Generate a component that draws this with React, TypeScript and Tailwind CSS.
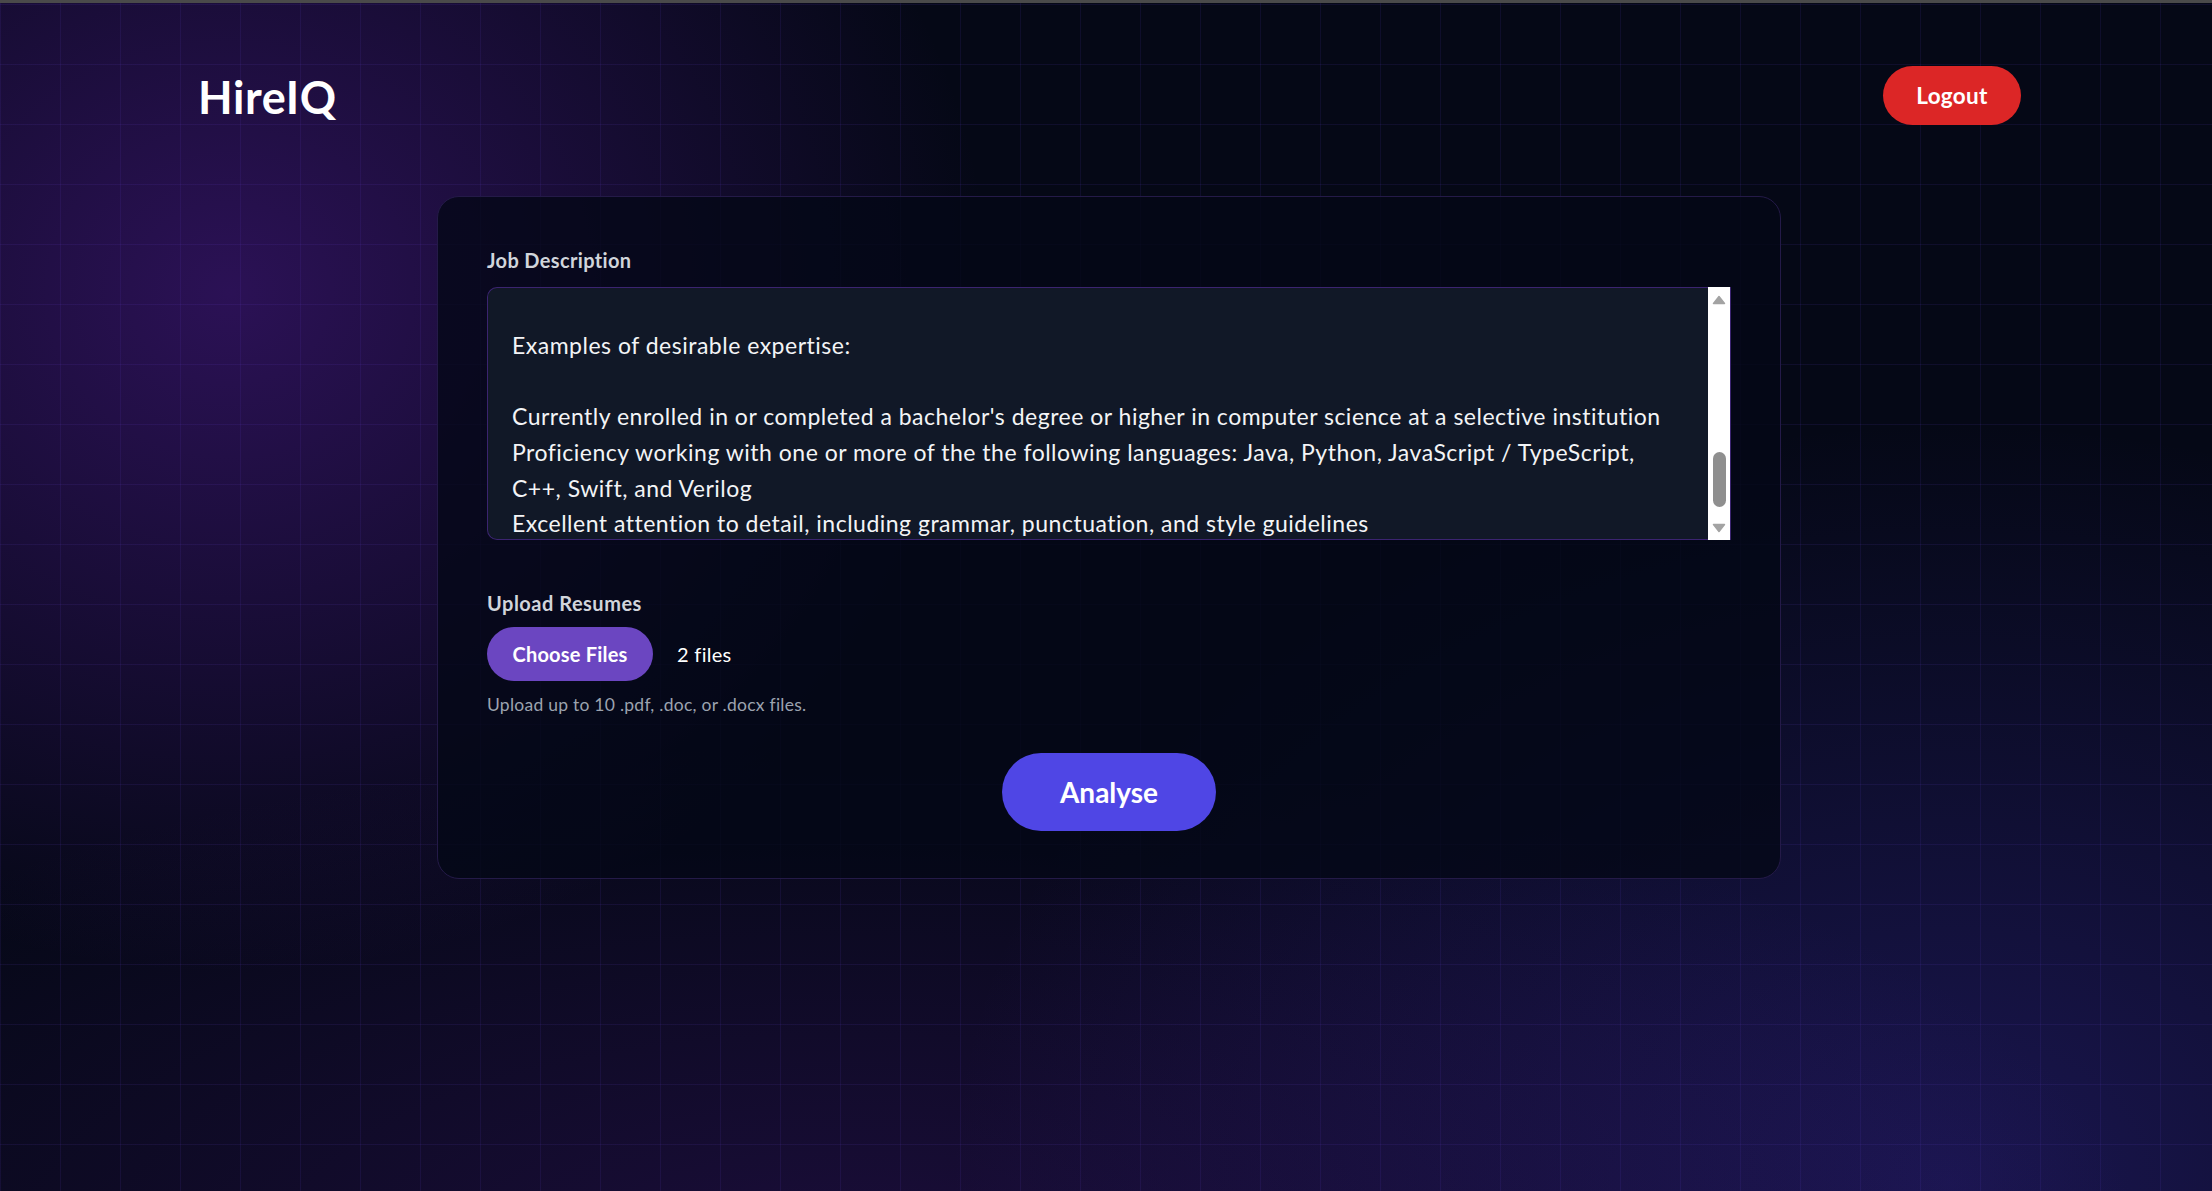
import { useState } from 'react';

const jobLines = [
  '',
  'Examples of desirable expertise:',
  '',
  "Currently enrolled in or completed a bachelor's degree or higher in computer science at a selective institution",
  'Proficiency working with one or more of the the following languages: Java, Python, JavaScript / TypeScript,',
  'C++, Swift, and Verilog',
  'Excellent attention to detail, including grammar, punctuation, and style guidelines',
];

function FakeScrollbar() {
  return (
    <div className="w-[23px] shrink-0 bg-white flex flex-col items-center pt-[8px] pb-[7px] border-r border-[#3b2470]">
      <svg width="14" height="10" viewBox="0 0 14 10">
        <path d="M7 1.5 L12.5 8.5 H1.5 Z" fill="#a3a3a3" stroke="#a3a3a3" strokeWidth="1.5" strokeLinejoin="round" />
      </svg>
      <div className="flex-1 w-full flex justify-center">
        <div className="mt-[147px] w-[13px] h-[55px] rounded-full bg-[#8f8f8f]" />
      </div>
      <svg width="14" height="10" viewBox="0 0 14 10">
        <path d="M7 8.5 L12.5 1.5 H1.5 Z" fill="#a3a3a3" stroke="#a3a3a3" strokeWidth="1.5" strokeLinejoin="round" />
      </svg>
    </div>
  );
}

export default function App() {
  const [fileCount] = useState(2);

  return (
    <div className="min-h-screen bg-[#050816] font-['Lato',sans-serif] overflow-hidden">
      <div className="h-[3px] bg-[#4a4a4a]" />
      <div className="relative min-h-[1188px]">
        {/* background glows + grid */}
        <div className="pointer-events-none absolute inset-0 bg-[radial-gradient(ellipse_760px_680px_at_230px_290px,rgba(88,28,160,0.46),transparent)]" />
        <div className="pointer-events-none absolute inset-0 bg-[radial-gradient(ellipse_1000px_760px_at_1950px_1180px,rgba(70,50,200,0.32),transparent)]" />
        <div className="pointer-events-none absolute inset-0 bg-[radial-gradient(ellipse_1300px_520px_at_850px_1260px,rgba(88,28,160,0.26),transparent)]" />
        <div className="pointer-events-none absolute inset-0 bg-[linear-gradient(to_right,rgba(110,70,230,0.1)_1px,transparent_1px),linear-gradient(to_bottom,rgba(110,70,230,0.1)_1px,transparent_1px)] bg-[size:60px_60px] bg-[position:0_1px]" />

        <div className="relative">
          <header className="flex items-center justify-between pl-[198px] pr-[191px] pt-[61px]">
            <h1 className="mt-[6px] text-[45px] leading-none font-bold text-white tracking-[0.6px]">HireIQ</h1>
            <button className="mt-[2px] w-[138px] h-[59px] rounded-full bg-[#dc2626] text-white text-[22.5px] font-bold tracking-[0.3px] flex items-center justify-center">
              Logout
            </button>
          </header>

          <main className="flex justify-center pl-[6px] mt-[71px]">
            <div className="w-[1344px] rounded-[22px] border border-[#241a48] bg-[#040716]/80 px-[49px] pt-[49px] pb-[47px]">
              <label className="block text-[20px] leading-[28px] font-bold text-[#d1d5db] tracking-[0.35px] mb-[13px]">Job Description</label>
              <div className="flex h-[253px]">
                <div className="flex-1 min-w-0 overflow-hidden rounded-l-[10px] border-y border-l border-[#3b2470] bg-[#111827] pl-[24px] pt-[4px]">
                  {jobLines.map((line, i) => (
                    <div key={i} className="whitespace-nowrap text-[23px] leading-[35.7px] tracking-[0.5px] text-[#f3f4f6]">
                      {line || '\u00a0'}
                    </div>
                  ))}
                </div>
                <FakeScrollbar />
              </div>

              <label className="block mt-[49px] text-[20px] leading-[28px] font-bold text-[#d1d5db] tracking-[0.5px] mb-[10px]">Upload Resumes</label>
              <div className="flex items-center">
                <button className="w-[166px] h-[54px] rounded-full bg-[#6b46c1] text-white text-[20px] font-bold tracking-[0.2px]">
                  Choose Files
                </button>
                <span className="ml-[24px] text-[20px] text-white tracking-[0.3px]">{fileCount} files</span>
              </div>
              <p className="mt-[11px] text-[17.5px] leading-[25px] tracking-[0.25px] text-[#9ca3af]">Upload up to 10 .pdf, .doc, or .docx files.</p>

              <div className="flex justify-center mt-[36px]">
                <button className="w-[214px] h-[78px] rounded-full bg-[#4f46e5] text-white text-[28px] font-bold">
                  Analyse
                </button>
              </div>
            </div>
          </main>
        </div>
      </div>
    </div>
  );
}
